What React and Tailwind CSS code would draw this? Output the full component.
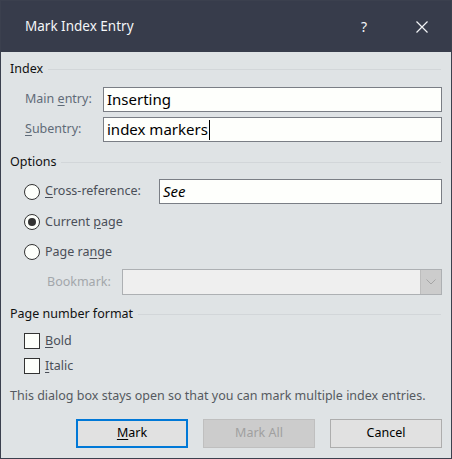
import React from "react";

const font = { fontFamily: '"Noto Sans", "Open Sans", sans-serif' };

const Group = ({ title, className = "" }) => (
  <div className={`flex items-center h-[16px] ${className}`}>
    <span className="text-[12.5px] text-[#111] leading-[16px] pr-[5px]">{title}</span>
    <div className="flex-1 h-px bg-[#d2d6d9] mr-[1px]" />
  </div>
);

const Radio = ({ checked }) => (
  <span className="w-[16px] h-[16px] rounded-full border border-[#333] bg-[#fdfffb] flex items-center justify-center shrink-0">
    {checked && <span className="w-[8px] h-[8px] rounded-full bg-[#333]" />}
  </span>
);

const Check = () => (
  <span className="w-[16px] h-[16px] border border-[#333] bg-[#fdfffb] shrink-0" />
);

const Field = ({ children, className = "" }) => (
  <div
    className={`h-[25px] border border-[#7a7e85] bg-[#fefffc] flex items-center pl-[3px] text-[15px] text-black ${className}`}
  >
    {children}
  </div>
);

export default function App() {
  return (
    <div
      style={font}
      className="w-[452px] h-[459px] flex flex-col bg-[#373c4b] border border-[#3b404e]"
    >
      {/* Title bar */}
      <div className="h-[51px] flex items-center shrink-0 text-[#f4f6f8]">
        <span className="ml-[24px] text-[13.5px] pb-[1px]">Mark Index Entry</span>
        <span className="ml-auto text-[14px] pb-[1px]">?</span>
        <svg className="ml-[49px] mr-[23px]" width="12" height="12" viewBox="0 0 12 12">
          <path d="M0.5 0.5 L11.5 11.5 M11.5 0.5 L0.5 11.5" stroke="#f2f4f6" strokeWidth="1.2" />
        </svg>
      </div>

      {/* Body */}
      <div className="flex-1 bg-[#dfe3e5] pl-[9px] pr-[9px] pt-[9px] flex flex-col text-[12.5px]">
        <Group title="Index" />

        <div className="flex items-center mt-[10px]">
          <span className="w-[93px] pl-[15px] text-[#5f6b78]">
            Main <u className="underline-offset-2">e</u>ntry:
          </span>
          <Field className="flex-1">Inserting</Field>
        </div>
        <div className="flex items-center mt-[5px]">
          <span className="w-[93px] pl-[15px] text-[#5f6b78]">
            <u className="underline-offset-2">S</u>ubentry:
          </span>
          <Field className="flex-1">
            index markers
            <span className="w-px h-[20px] bg-black ml-[1px]" />
          </Field>
        </div>

        <Group title="Options" className="mt-[12px]" />

        <div className="flex items-center mt-[9px] pl-[14px]">
          <Radio />
          <span className="ml-[5px] w-[114px] text-[#4a4f58]">
            <u className="underline-offset-2">C</u>ross-reference:
          </span>
          <Field className="flex-1 italic">See</Field>
        </div>
        <div className="flex items-center h-[20px] mt-[8px] pl-[14px]">
          <Radio checked />
          <span className="ml-[5px] text-[#4a4f58]">
            Current <u className="underline-offset-2">p</u>age
          </span>
        </div>
        <div className="flex items-center h-[20px] mt-[10px] pl-[14px]">
          <Radio />
          <span className="ml-[5px] text-[#4a4f58]">
            Page ra<u className="underline-offset-2">n</u>ge
          </span>
        </div>
        <div className="flex items-center mt-[7px]">
          <span className="w-[112px] pl-[37px] text-[#a3a7ab]">Bookmark:</span>
          <div className="flex-1 h-[26px] border border-[#adb0b3] bg-[#efefef] flex justify-end">
            <div className="w-[21px] bg-[#cccccc] border-l border-[#bdbdbd] flex items-center justify-center">
              <svg width="10" height="6" viewBox="0 0 10 6">
                <path d="M0.5 0.5 L5 5 L9.5 0.5" fill="none" stroke="#a5a5a5" strokeWidth="1" />
              </svg>
            </div>
          </div>
        </div>

        <Group title="Page number format" className="mt-[11px]" />

        <div className="flex items-center h-[20px] mt-[9px] pl-[14px]">
          <Check />
          <span className="ml-[5px] text-[#4a4f58]">
            <u className="underline-offset-2">B</u>old
          </span>
        </div>
        <div className="flex items-center h-[20px] mt-[5px] pl-[14px]">
          <Check />
          <span className="ml-[5px] text-[#4a4f58]">
            <u className="underline-offset-2">I</u>talic
          </span>
        </div>

        <div className="h-[16px] mt-[12px] leading-[16px] text-[#555a60]">
          This dialog box stays open so that you can mark multiple index entries.
        </div>

        <div className="flex justify-end gap-[15px] mt-[15px]">
          <button className="w-[112px] h-[29px] border-2 border-[#0078d7] bg-[#e1e1e1] text-black text-[12.5px]">
            <u className="underline-offset-2">M</u>ark
          </button>
          <button className="w-[112px] h-[29px] border border-[#bfbfbf] bg-[#cccccc] text-[#a0a0a0] text-[12.5px]">
            Mark All
          </button>
          <button className="w-[112px] h-[29px] border border-[#adadad] bg-[#e1e1e1] text-black text-[12.5px]">
            Cancel
          </button>
        </div>
      </div>
    </div>
  );
}
